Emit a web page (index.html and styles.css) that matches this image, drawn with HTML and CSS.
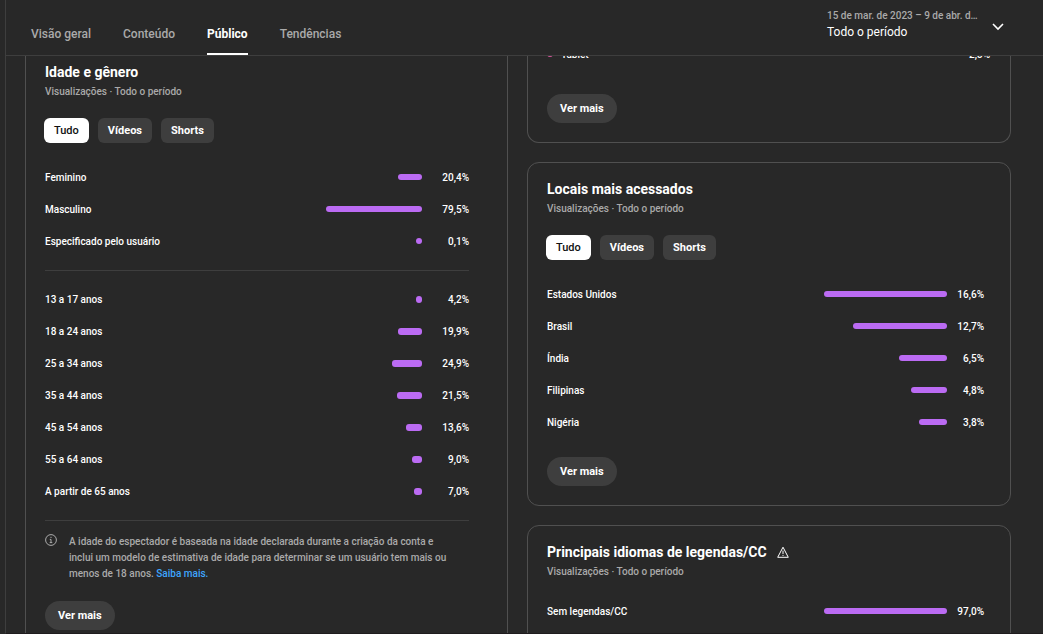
FILE: index.html
```html
<!DOCTYPE html>
<html lang="pt-BR">
<head>
<meta charset="utf-8">
<title>Estatísticas do canal – Público</title>
<link rel="stylesheet" href="styles.css">
</head>
<body>
<div class="app">
  <header class="topbar">
    <nav class="tabs">
      <a class="tab" href="#geral">Visão geral</a>
      <a class="tab" href="#conteudo">Conteúdo</a>
      <a class="tab tab-active" href="#publico" aria-current="page">Público</a>
      <a class="tab" href="#tendencias">Tendências</a>
    </nav>
    <button class="period" type="button">
      <span class="period-text">
        <span class="period-range">15 de mar. de 2023 – 9 de abr. d…</span>
        <span class="period-name">Todo o período</span>
      </span>
      <svg class="chevron" viewBox="0 0 12 8" aria-hidden="true"><path d="M1 1l5 5 5-5"/></svg>
    </button>
  </header>

  <main class="content">
    <div class="column">
      <section class="card card-age card-cut">
        <h2 class="card-title">Idade e gênero</h2>
        <p class="card-sub">Visualizações · Todo o período</p>
        <div class="chips">
          <button class="chip chip-active" type="button">Tudo</button>
          <button class="chip" type="button">Vídeos</button>
          <button class="chip" type="button">Shorts</button>
        </div>
        <ul class="rows">
          <li class="row"><span class="label">Feminino</span><span class="track"><span class="bar" style="width:25%"></span></span><span class="value">20,4%</span></li>
          <li class="row"><span class="label">Masculino</span><span class="track"><span class="bar" style="width:100%"></span></span><span class="value">79,5%</span></li>
          <li class="row"><span class="label">Especificado pelo usuário</span><span class="track"><span class="bar" style="width:1%"></span></span><span class="value">0,1%</span></li>
        </ul>
        <hr class="rule">
        <ul class="rows rows-thick">
          <li class="row"><span class="label">13 a 17 anos</span><span class="track"><span class="bar" style="width:5%"></span></span><span class="value">4,2%</span></li>
          <li class="row"><span class="label">18 a 24 anos</span><span class="track"><span class="bar" style="width:25%"></span></span><span class="value">19,9%</span></li>
          <li class="row"><span class="label">25 a 34 anos</span><span class="track"><span class="bar" style="width:31%"></span></span><span class="value">24,9%</span></li>
          <li class="row"><span class="label">35 a 44 anos</span><span class="track"><span class="bar" style="width:26%"></span></span><span class="value">21,5%</span></li>
          <li class="row"><span class="label">45 a 54 anos</span><span class="track"><span class="bar" style="width:17%"></span></span><span class="value">13,6%</span></li>
          <li class="row"><span class="label">55 a 64 anos</span><span class="track"><span class="bar" style="width:10%"></span></span><span class="value">9,0%</span></li>
          <li class="row"><span class="label">A partir de 65 anos</span><span class="track"><span class="bar" style="width:8%"></span></span><span class="value">7,0%</span></li>
        </ul>
        <hr class="rule">
        <div class="note">
          <svg class="info" viewBox="0 0 12 12" aria-hidden="true"><circle cx="6" cy="6" r="5.4"/><path d="M6 2.8v1.2M4.8 5.4H6v3.2M4.7 8.6h2.6"/></svg>
          <p class="note-text">A idade do espectador é baseada na idade declarada durante a criação da conta e inclui um modelo de estimativa de idade para determinar se um usuário tem mais ou menos de 18 anos. <a class="link" href="#saiba-mais">Saiba mais.</a></p>
        </div>
        <button class="more" type="button">Ver mais</button>
      </section>
    </div>

    <div class="column">
      <section class="card card-device card-cut">
        <ul class="rows">
          <li class="row"><span class="dot"></span><span class="label">Tablet</span><span class="value">2,3%</span></li>
        </ul>
        <button class="more" type="button">Ver mais</button>
      </section>

      <section class="card">
        <h2 class="card-title">Locais mais acessados</h2>
        <p class="card-sub">Visualizações · Todo o período</p>
        <div class="chips">
          <button class="chip chip-active" type="button">Tudo</button>
          <button class="chip" type="button">Vídeos</button>
          <button class="chip" type="button">Shorts</button>
        </div>
        <ul class="rows">
          <li class="row"><span class="label">Estados Unidos</span><span class="track"><span class="bar" style="width:100%"></span></span><span class="value">16,6%</span></li>
          <li class="row"><span class="label">Brasil</span><span class="track"><span class="bar" style="width:76.5%"></span></span><span class="value">12,7%</span></li>
          <li class="row"><span class="label">Índia</span><span class="track"><span class="bar" style="width:39%"></span></span><span class="value">6,5%</span></li>
          <li class="row"><span class="label">Filipinas</span><span class="track"><span class="bar" style="width:29%"></span></span><span class="value">4,8%</span></li>
          <li class="row"><span class="label">Nigéria</span><span class="track"><span class="bar" style="width:23%"></span></span><span class="value">3,8%</span></li>
        </ul>
        <button class="more" type="button">Ver mais</button>
      </section>

      <section class="card">
        <h2 class="card-title">Principais idiomas de legendas/CC
          <svg class="warning" viewBox="0 0 12 12" aria-hidden="true"><path d="M6 1.2L11.3 11.3H.7z"/><path d="M6 4.6v3.4M6 8.9v1"/></svg>
        </h2>
        <p class="card-sub">Visualizações · Todo o período</p>
        <ul class="rows rows-plain">
          <li class="row"><span class="label">Sem legendas/CC</span><span class="track"><span class="bar" style="width:100%"></span></span><span class="value">97,0%</span></li>
        </ul>
      </section>
    </div>
  </main>
</div>
</body>
</html>
```

FILE: styles.css
```css
* { box-sizing: border-box; }

body {
  margin: 0;
  background: #282828;
  color: #fff;
  font-family: Roboto, "Liberation Sans", sans-serif;
  font-size: 10px;
  font-weight: 500;
}

button {
  border: 0;
  color: inherit;
  font-family: inherit;
  cursor: pointer;
}

.app {
  display: flex;
  flex-direction: column;
  height: 100vh;
  margin-left: 5px;
  border-left: 1px solid #3e3e3e;
  border-bottom: 1px solid #1f1c1e;
}

.topbar {
  display: flex;
  flex: none;
  justify-content: space-between;
  height: 56px;
  padding: 0 39px 0 25px;
  border-bottom: 1px solid #3e3e3e;
}

.tabs {
  display: flex;
  gap: 32px;
}

.tab {
  display: flex;
  align-items: center;
  padding-top: 14px;
  border-bottom: 2px solid transparent;
  color: #aaa;
  font-size: 12px;
  text-decoration: none;
}

.tab-active {
  border-color: #fff;
  color: #fff;
  font-weight: 700;
}

.period {
  display: flex;
  align-items: center;
  gap: 12px;
  padding: 0 0 7px;
  background: none;
  text-align: left;
}

.period-text {
  display: grid;
  width: 153px;
  line-height: 16px;
}

.period-range {
  color: #aaa;
  font-size: 10px;
  font-weight: 500;
  white-space: nowrap;
}

.period-name {
  font-size: 12px;
  font-weight: 400;
}

.chevron {
  width: 12px;
  height: 8px;
  margin-top: 5px;
  fill: none;
  stroke: #fff;
  stroke-width: 1.6;
}

.content {
  display: grid;
  flex: 1;
  grid-template-columns: 483fr 484fr;
  gap: 19px;
  min-height: 0;
  padding: 0 32px 0 19px;
  overflow: hidden;
}

.column {
  display: flex;
  flex-direction: column;
  gap: 19px;
}

.card {
  padding: 16px 26px 19px 19px;
  border: 1px solid #505050;
  border-radius: 12px;
}

.card-cut {
  border-top: 0;
  border-top-left-radius: 0;
  border-top-right-radius: 0;
}

.card-age {
  padding-top: 6px;
  padding-right: 38px;
}

.card-device {
  margin-top: -18px;
  padding-top: 0;
}

.card-title {
  display: flex;
  align-items: center;
  gap: 10px;
  margin: 0 0 2px;
  font-size: 14px;
  font-weight: 700;
  line-height: 20px;
}

.warning {
  width: 12px;
  height: 12px;
  fill: none;
  stroke: #fff;
}

.card-sub {
  margin: 0;
  color: #aaa;
  line-height: 16px;
}

.chips {
  display: flex;
  gap: 9px;
  margin: 18px -1px;
}

.chip {
  height: 25px;
  padding: 0 10px;
  border-radius: 6px;
  background: #3e3e3e;
  font-size: 11px;
  font-weight: 700;
}

.chip-active {
  background: #fff;
  color: #111;
  font-weight: 500;
}

.rows {
  margin: 0;
  padding: 0;
  list-style: none;
}

.rows-plain { margin-top: 15px; }

.row {
  display: flex;
  align-items: center;
  height: 32px;
}

.label { flex: 1; }

.track {
  display: flex;
  justify-content: flex-end;
  width: 123px;
}

.card-age .track { width: 96px; }

.bar {
  min-width: 6px;
  height: 6px;
  border-radius: 3px;
  background: #bb6bf3;
}

.rows-thick .bar { height: 7px; }

.value {
  width: 37px;
  text-align: right;
}

.card-age .value { width: 47px; }

.dot {
  width: 6px;
  height: 6px;
  margin-right: 8px;
  border-radius: 3px;
  background: #d5559c;
}

.card-device .value { margin-right: -6px; }

.rule {
  height: 1px;
  margin: 13px 0 12px;
  border: 0;
  background: #3e3e3e;
}

.note {
  display: flex;
  gap: 12px;
  padding-right: 12px;
}

.info {
  flex: none;
  width: 12px;
  height: 12px;
  margin-top: 1px;
  fill: none;
  stroke: #aaa;
}

.note-text {
  margin: 1px 0 0;
  color: #aaa;
  line-height: 16px;
}

.link {
  color: #3ea6ff;
  text-decoration: none;
}

.more {
  height: 29px;
  margin-top: 19px;
  padding: 0 13px;
  border-radius: 15px;
  background: #3e3e3e;
  font-size: 11px;
  font-weight: 700;
}

.card-device .more { margin-top: 24px; }
```
